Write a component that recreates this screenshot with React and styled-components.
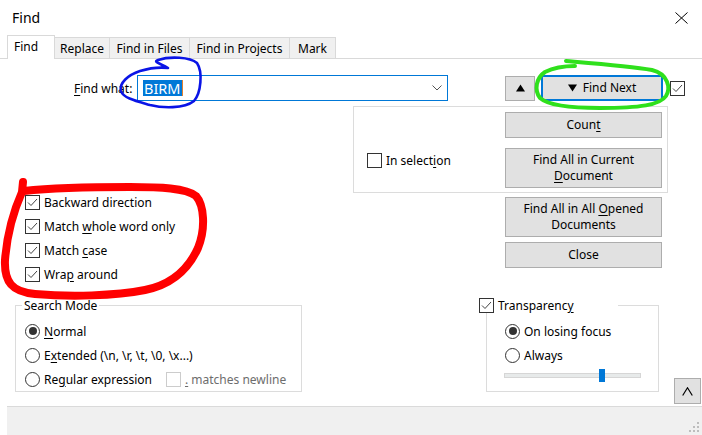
import React from "react";
import styled, { createGlobalStyle } from "styled-components";

const GlobalStyle = createGlobalStyle`
  html, body {
    margin: 0;
    padding: 0;
    background: #ffffff;
  }
  * {
    box-sizing: border-box;
  }
`;

const Window = styled.div`
  position: relative;
  width: 702px;
  height: 435px;
  overflow: hidden;
  display: flex;
  flex-direction: column;
  background: #ffffff;
  color: #000;
  font-family: "Noto Sans", "Segoe UI", sans-serif;
  font-size: 12px;
`;

const TitleBar = styled.div`
  height: 35px;
  flex: none;
  display: flex;
  align-items: center;
  justify-content: space-between;
  padding: 0 14px 0 12px;
  font-size: 14px;
`;

const TabStrip = styled.div`
  height: 24px;
  flex: none;
  display: flex;
  align-items: flex-end;
  padding-left: 7px;
  border-bottom: 1px solid #d9d9d9;
`;

const Tab = styled.div`
  width: ${p => p.$w}px;
  height: ${p => (p.$active ? 24 : 21)}px;
  margin-bottom: ${p => (p.$active ? -1 : 0)}px;
  display: flex;
  align-items: center;
  justify-content: ${p => (p.$active ? "flex-start" : "center")};
  padding: ${p => (p.$active ? "0 0 2px 6px" : "0")};
  background: ${p => (p.$active ? "#ffffff" : "#f0f0f0")};
  border: 1px solid #d9d9d9;
  border-bottom: none;
  border-left: ${p => (p.$active ? "1px solid #d9d9d9" : "none")};
  white-space: nowrap;
`;

const Panel = styled.div`
  flex: 1;
  display: flex;
  flex-direction: column;
  padding-top: 16px;
`;

const FindRow = styled.div`
  display: flex;
  align-items: center;
  height: 26px;
  padding-left: 74px;
`;

const FieldLabel = styled.span`
  width: 63px;
  white-space: nowrap;
`;

const ComboBox = styled.div`
  width: 311px;
  height: 26px;
  border: 1px solid #0078d7;
  display: flex;
  align-items: center;
  justify-content: space-between;
  padding: 0 5px 0 5px;
`;

const Selected = styled.span`
  display: flex;
  align-items: center;
  height: 16px;
  padding: 0 1px;
  background: #0078d7;
  color: #ffffff;
  font-size: 14.5px;
  border-right: 1px solid #e08030;
`;

const Button = styled.button`
  width: ${p => p.$w || 157}px;
  height: ${p => (p.$tall ? 40 : 26)}px;
  margin: 0;
  padding: 0 4px;
  background: #e1e1e1;
  border: ${p => (p.$default ? "2px solid #0078d7" : "1px solid #adadad")};
  border-radius: 0;
  color: #000;
  font-family: inherit;
  font-size: 12px;
  line-height: 16px;
  text-align: center;
  display: flex;
  align-items: center;
  justify-content: center;
  gap: 6px;
`;

const ArrowButton = styled(Button)`
  height: 25px;
  margin-left: 57px;
`;

const FindNextButton = styled(Button)`
  margin-left: 6px;
`;

const TopCheck = styled.span`
  display: flex;
  margin-left: 7px;
`;

const Middle = styled.div`
  display: flex;
  margin-top: 5px;
`;

const OptionColumn = styled.div`
  width: 353px;
  display: flex;
  flex-direction: column;
  padding: 84px 0 0 25px;
`;

const ActionColumn = styled.div`
  width: 315px;
  display: flex;
  flex-direction: column;
`;

const SelectionGroup = styled.div`
  height: 87px;
  display: flex;
  border: 1px solid #dcdcdc;
`;

const SelectionLeft = styled.div`
  width: 151px;
  padding: 46px 0 0 13px;
`;

const ButtonStack = styled.div`
  display: flex;
  flex-direction: column;
  gap: ${p => p.$gap}px;
  padding-top: ${p => p.$top}px;
  margin-left: ${p => p.$left || 0}px;
`;

const Row = styled.label`
  height: ${p => p.$h || 24}px;
  display: flex;
  align-items: center;
  gap: ${p => p.$gap || 4}px;
  white-space: nowrap;
  color: ${p => (p.$disabled ? "#6d6d6d" : "#000")};
`;

const Box = styled.span`
  width: 15px;
  height: 15px;
  flex: none;
  display: inline-flex;
  background: #ffffff;
  border: 1px solid ${p => (p.$disabled ? "#cccccc" : "#333333")};
`;

const RadioCircle = styled.span`
  width: 15px;
  height: 15px;
  flex: none;
  display: inline-flex;
  align-items: center;
  justify-content: center;
  border: 1px solid #333333;
  border-radius: 50%;
  background: #ffffff;
  &::after {
    content: "";
    width: 8px;
    height: 8px;
    border-radius: 50%;
    background: ${p => (p.$on ? "#333333" : "transparent")};
  }
`;

const U = styled.u`
  text-decoration: underline;
  text-underline-offset: 2px;
`;

const BottomRow = styled.div`
  display: flex;
  align-items: flex-start;
  margin-top: 12px;
`;

const Group = styled.fieldset`
  margin: 0 0 0 15px;
  width: 287px;
  padding: 0;
  border: 1px solid #dcdcdc;
  min-width: 0;
`;

const Legend = styled.legend`
  margin-left: 6px;
  padding: 0 2px;
  line-height: 15px;
`;

const RadioList = styled.div`
  display: flex;
  flex-direction: column;
  padding: 6px 0 0 9px;
`;

const InlineOption = styled.span`
  display: inline-flex;
  align-items: center;
  gap: 4px;
  margin-left: ${p => p.$left}px;
  color: #6d6d6d;
`;

const Transparency = styled.div`
  width: 180px;
  margin-left: 177px;
  display: flex;
  flex-direction: column;
`;

const TransHeader = styled.div`
  height: 15px;
  display: flex;
  align-items: center;
  gap: 4px;
`;

const HeaderLine = styled.span`
  align-self: flex-start;
  margin-left: auto;
  margin-top: 7px;
  width: 41px;
  height: 8px;
  border-top: 1px solid #dcdcdc;
  border-right: 1px solid #dcdcdc;
`;

const TransBox = styled.div`
  margin-left: 7px;
  width: 173px;
  border: 1px solid #dcdcdc;
  border-top: none;
  padding: 6px 0 0 18px;
  display: flex;
  flex-direction: column;
`;

const SliderRow = styled.div`
  height: 24px;
  padding-top: 6px;
  margin-left: -1px;
`;

const Track = styled.div`
  position: relative;
  width: 137px;
  height: 5px;
  background: #e7eaea;
  border: 1px solid #d6d6d6;
`;

const Thumb = styled.span`
  position: absolute;
  top: -5px;
  width: 6px;
  height: 13px;
  background: #0078d7;
`;

const UpButton = styled(Button)`
  width: 27px;
  height: 26px;
  margin: 80px 0 0 15px;
  padding: 0;
`;

const StatusBar = styled.div`
  height: 29px;
  flex: none;
  margin-left: 7px;
  background: #f0f0f0;
  border-top: 1px solid #dadada;
  display: flex;
  justify-content: flex-end;
  align-items: flex-end;
  padding: 0 2px 2px 0;
`;

const Overlay = styled.svg`
  position: absolute;
  left: 0;
  top: 0;
  pointer-events: none;
`;

const Check = () => (
  <svg width="13" height="13" viewBox="0 0 13 13">
    <polyline points="2,6.5 5,9.5 11,3" fill="none" stroke="#444" strokeWidth="1" />
  </svg>
);

const Triangle = ({ down }) => (
  <svg width="9" height="8" viewBox="0 0 9 8">
    <polygon points={down ? "0,0.5 9,0.5 4.5,7.5" : "0,7.5 9,7.5 4.5,0.5"} fill="#000" />
  </svg>
);

const CheckBox = ({ checked, disabled }) => (
  <Box $disabled={disabled}>{checked && <Check />}</Box>
);

const Option = ({ checked, children }) => (
  <Row>
    <CheckBox checked={checked} />
    <span>{children}</span>
  </Row>
);

const Radio = ({ on, children }) => (
  <Row>
    <RadioCircle $on={on} />
    <span>{children}</span>
  </Row>
);

const tabs = [
  { label: "Find", w: 48, active: true },
  { label: "Replace", w: 55 },
  { label: "Find in Files", w: 80 },
  { label: "Find in Projects", w: 100 },
  { label: "Mark", w: 46 }
];

const App = () => {
  return (
    <>
      <GlobalStyle />
      <Window>
        <TitleBar>
          <span>Find</span>
          <svg width="13" height="12" viewBox="0 0 13 12">
            <path d="M0.5 0.5 L12.5 11.5 M12.5 0.5 L0.5 11.5" stroke="#000" strokeWidth="1" />
          </svg>
        </TitleBar>

        <TabStrip>
          {tabs.map(t => (
            <Tab key={t.label} $w={t.w} $active={t.active}>
              {t.label}
            </Tab>
          ))}
        </TabStrip>

        <Panel>
          <FindRow>
            <FieldLabel>
              <U>F</U>ind what:
            </FieldLabel>
            <ComboBox>
              <Selected>BIRM</Selected>
              <svg width="10" height="6" viewBox="0 0 10 6">
                <polyline points="0.5,0.5 5,5 9.5,0.5" fill="none" stroke="#555" strokeWidth="1" />
              </svg>
            </ComboBox>
            <ArrowButton $w={30}>
              <Triangle />
            </ArrowButton>
            <FindNextButton $w={122} $default>
              <Triangle down />
              <span>Find Next</span>
            </FindNextButton>
            <TopCheck>
              <CheckBox checked />
            </TopCheck>
          </FindRow>

          <Middle>
            <OptionColumn>
              <Option checked>Backward direction</Option>
              <Option checked>
                Match <U>w</U>hole word only
              </Option>
              <Option checked>
                Match <U>c</U>ase
              </Option>
              <Option checked>
                Wra<U>p</U> around
              </Option>
            </OptionColumn>

            <ActionColumn>
              <SelectionGroup>
                <SelectionLeft>
                  <Row $h={15}>
                    <CheckBox />
                    <span>
                      In select<U>i</U>on
                    </span>
                  </Row>
                </SelectionLeft>
                <ButtonStack $gap={10} $top={5}>
                  <Button>
                    <span>
                      Coun<U>t</U>
                    </span>
                  </Button>
                  <Button $tall>
                    <span>
                      Find All in Current
                      <br />
                      <U>D</U>ocument
                    </span>
                  </Button>
                </ButtonStack>
              </SelectionGroup>
              <ButtonStack $gap={5} $top={4} $left={152}>
                <Button $tall>
                  <span>
                    Find All in All <U>O</U>pened
                    <br />
                    Documents
                  </span>
                </Button>
                <Button>Close</Button>
              </ButtonStack>
            </ActionColumn>
          </Middle>

          <BottomRow>
            <Group>
              <Legend>Search Mode</Legend>
              <RadioList>
                <Radio on>
                  <U>N</U>ormal
                </Radio>
                <Radio>
                  E<U>x</U>tended (\n, \r, \t, \0, \x...)
                </Radio>
                <Row>
                  <RadioCircle />
                  <span>
                    Re<U>g</U>ular expression
                  </span>
                  <InlineOption $left={10}>
                    <CheckBox disabled />
                    <span>
                      <U>.</U> matches newline
                    </span>
                  </InlineOption>
                </Row>
              </RadioList>
            </Group>

            <Transparency>
              <TransHeader>
                <CheckBox checked />
                <span>
                  Transparenc<U>y</U>
                </span>
                <HeaderLine />
              </TransHeader>
              <TransBox>
                <Radio on>On losing focus</Radio>
                <Radio>Always</Radio>
                <SliderRow>
                  <Track>
                    <Thumb style={{ left: 94 }} />
                  </Track>
                </SliderRow>
              </TransBox>
            </Transparency>

            <UpButton>
              <svg width="11" height="9" viewBox="0 0 11 9">
                <polyline points="0.7,8.5 5.5,0.8 10.3,8.5" fill="none" stroke="#000" strokeWidth="1.2" />
              </svg>
            </UpButton>
          </BottomRow>
        </Panel>

        <StatusBar>
          <svg width="11" height="11" viewBox="0 0 11 11">
            <g fill="#bdbdbd">
              <rect x="8" y="0" width="2" height="2" />
              <rect x="4" y="4" width="2" height="2" />
              <rect x="8" y="4" width="2" height="2" />
              <rect x="0" y="8" width="2" height="2" />
              <rect x="4" y="8" width="2" height="2" />
              <rect x="8" y="8" width="2" height="2" />
            </g>
          </svg>
        </StatusBar>

        <Overlay width="702" height="435" viewBox="0 0 702 435">
          <path
            d="M168 68 C162 64 152 62 158 60 C170 56 190 57 197 63 C203 72 201 93 194 101 C184 109 162 108 150 105 C136 101 123 98 121 91 C119 83 128 75 140 71 C150 68 160 67 168 68"
            fill="none"
            stroke="#0a14e6"
            strokeWidth="2.6"
            strokeLinecap="round"
          />
          <path
            d="M566 61 C590 63 630 66 652 70 C668 74 671 88 666 96 C660 105 640 108 600 108 C570 108 548 105 540 98 C534 90 536 78 545 72 C555 67 565 66 575 66"
            fill="none"
            stroke="#2fe01c"
            strokeWidth="4"
            strokeLinecap="round"
          />
          <path
            d="M23 182 L22 192 C14 210 7 235 5 260 C4 282 12 292 35 294 C70 297 115 296 145 290 C170 285 188 270 198 248 C206 228 204 205 196 196 C186 188 160 187 130 187 C95 187 60 187 24 191"
            fill="none"
            stroke="#ff0000"
            strokeWidth="8"
            strokeLinecap="round"
          />
        </Overlay>
      </Window>
    </>
  );
};

export default App;
